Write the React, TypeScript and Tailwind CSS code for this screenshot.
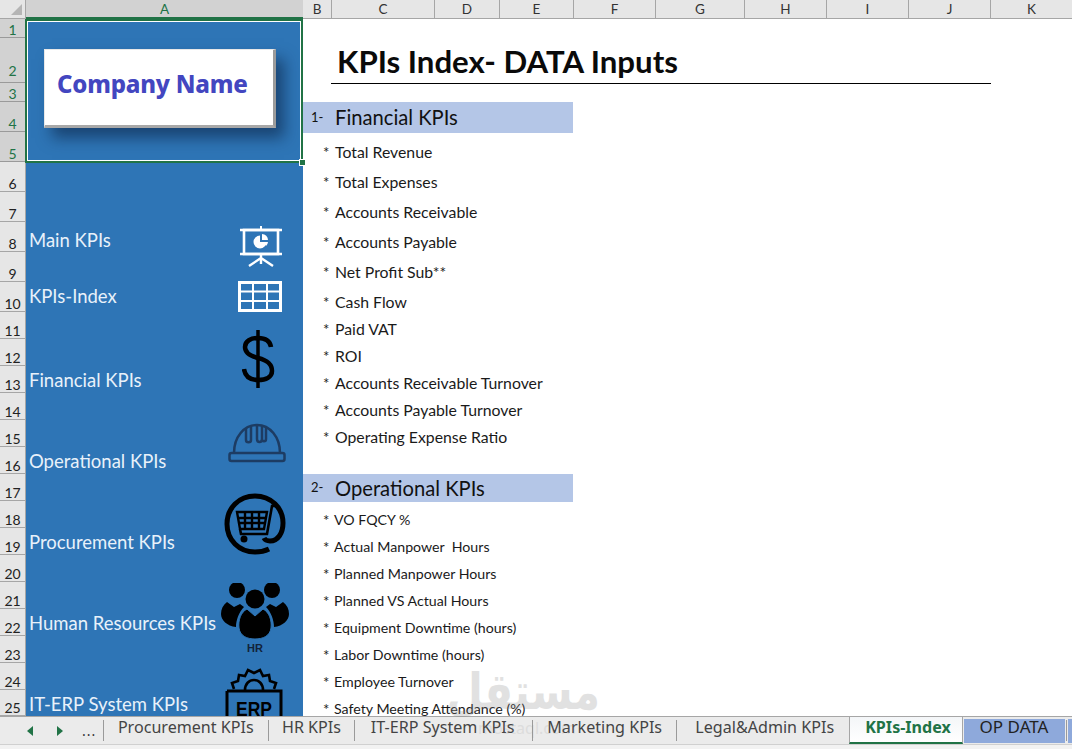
import React from 'react'

const calibri = "font-['Lato','Noto_Sans',sans-serif]"

const columns = [
  { name: 'B', w: 'w-[29px]' },
  { name: 'C', w: 'w-[103px]' },
  { name: 'D', w: 'w-[65px]' },
  { name: 'E', w: 'w-[74px]' },
  { name: 'F', w: 'w-[82px]' },
  { name: 'G', w: 'w-[89px]' },
  { name: 'H', w: 'w-[82px]' },
  { name: 'I', w: 'w-[82px]' },
  { name: 'J', w: 'w-[82px]' },
  { name: 'K', w: 'w-[82px]' },
]

const rows = [
  { n: 1, h: 'h-[19px]' },
  { n: 2, h: 'h-[45px]' },
  { n: 3, h: 'h-[19px]' },
  { n: 4, h: 'h-[30px]' },
  { n: 5, h: 'h-[30px]' },
  { n: 6, h: 'h-[30px]' },
  { n: 7, h: 'h-[30px]' },
  { n: 8, h: 'h-[30px]' },
  { n: 9, h: 'h-[30px]' },
  { n: 10, h: 'h-[30px]' },
  ...[11, 12, 13, 14, 15, 16, 17, 18, 19, 20, 21, 22, 23, 24].map((n) => ({ n, h: 'h-[27px]' })),
  { n: 25, h: 'h-[26px]' },
]

// column A labels, keyed by row
const sideLabels: Record<number, { text: string; pad: string }> = {
  8: { text: 'Main KPIs', pad: 'pt-[7px]' },
  10: { text: 'KPIs-Index', pad: 'pb-[1px]' },
  13: { text: 'Financial KPIs', pad: 'pt-[3px]' },
  16: { text: 'Operational KPIs', pad: 'pt-[3px]' },
  19: { text: 'Procurement KPIs', pad: 'pt-[3px]' },
  22: { text: 'Human Resources KPIs', pad: 'pt-[3px]' },
  25: { text: 'IT-ERP System KPIs', pad: 'pt-[4px]' },
}

const financial = [
  'Total Revenue',
  'Total Expenses',
  'Accounts Receivable',
  'Accounts Payable',
  'Net Profit Sub**',
  'Cash Flow',
  'Paid VAT',
  'ROI',
  'Accounts Receivable Turnover',
  'Accounts Payable Turnover',
  'Operating Expense Ratio',
]

const operational = [
  'VO FQCY %',
  'Actual Manpower  Hours',
  'Planned Manpower Hours',
  'Planned VS Actual Hours',
  'Equipment Downtime (hours)',
  'Labor Downtime (hours)',
  'Employee Turnover',
  'Safety Meeting Attendance (%)',
]

function BigItem({ text, h }: { text: string; h: string }) {
  return (
    <div className={`${h} flex items-end text-[15.8px] leading-[20px] text-[#1a1a1a]`}>
      <span className="w-[32px] pl-[20px] text-[15px]">*</span>
      <span className="whitespace-pre">{text}</span>
    </div>
  )
}

function SmallItem({ text, h }: { text: string; h: string }) {
  return (
    <div className={`${h} flex items-end text-[14.2px] leading-[16px] text-[#1a1a1a]`}>
      <span className="w-[31px] pl-[20px] text-[15px]">*</span>
      <span className="whitespace-pre">{text}</span>
    </div>
  )
}

function SectionBand({ num, text, h }: { num: string; text: string; h: string }) {
  return (
    <div className={`${h} w-[270px] bg-[#b4c6e7] flex items-center text-[#111]`}>
      <span className="w-[32px] pl-[8px] text-[13px]">{num}</span>
      <span className="text-[20.2px] leading-none">{text}</span>
    </div>
  )
}

function BoardIcon() {
  return (
    <svg width="44" height="42" viewBox="0 0 44 42" className="absolute left-[213px] top-[206px]" fill="none" stroke="#fff">
      <path d="M22 1v3" strokeWidth="2" />
      <path d="M1 5h42M1 29h42" strokeWidth="2.4" />
      <rect x="5" y="5" width="34" height="24" strokeWidth="2.6" />
      <path d="M22 29v4M22 33l-12 8M22 33l12 8M22 33v6" strokeWidth="2.4" />
      <path d="M21 10.500a6.500 6.500 0 1 0 6.500 6.500H21z" fill="#fff" stroke="none" />
      <path d="M23 9a6 6 0 0 1 6 6h-6zM24 17h5a6 6 0 0 1-2 4z" fill="#fff" stroke="none" />
    </svg>
  )
}

function TableIcon() {
  return (
    <svg width="44" height="31" viewBox="0 0 44 31" className="absolute left-[212px] top-[262px]" fill="none" stroke="#fff">
      <rect x="1.500" y="1.500" width="41" height="28" strokeWidth="3" />
      <path d="M1 10.500h42M1 20h42M15 1v29M29 1v29" strokeWidth="2" />
    </svg>
  )
}

function DollarIcon() {
  return (
    <svg width="34" height="58" viewBox="0 0 34 58" className="absolute left-[216px] top-[311px]" fill="none" stroke="#000" strokeWidth="4.500">
      <path d="M29 17c-1-6-6-9-13-9S3 11 3 17c0 6 5 9 13 11s14 5 14 13c0 6-6 9-14 9S3 46 2 39" />
      <path d="M16 0v58" strokeWidth="3.500" />
    </svg>
  )
}

function HelmetIcon() {
  return (
    <svg width="58" height="40" viewBox="0 0 58 40" className="absolute left-[202px] top-[404px]" fill="none" stroke="#1d3c63" strokeWidth="2.500">
      <path d="M6 30c0-16 10-28 23-28s23 12 23 28" />
      <rect x="1.500" y="30" width="55" height="8" rx="2" />
      <path d="M18 5v12c0 3 5 3 5 0V3M23 17V3M29 3v13c0 4 5 4 5 0V3M38 5v11c0 3-4 3-4 0" />
    </svg>
  )
}

function CartIcon() {
  return (
    <svg width="62" height="62" viewBox="0 0 62 62" className="absolute left-[198px] top-[474px]" fill="none" stroke="#000">
      <path d="M45 56c-4 2-8 3-14 3C15 59 3 47 3 31S15 3 31 3s28 12 28 27c0 10-5 18-13 18-3 0-5-1-6-3" strokeWidth="5" />
      <path d="M13 19h30l-3 17H16zM13 25h29M14 30h27M21 19v17M28 19v17M35 19v17" strokeWidth="2.400" />
      <path d="M16 36l1 5h26l5-28h6" strokeWidth="2.600" />
      <circle cx="20" cy="46" r="3.500" fill="#000" stroke="none" />
    </svg>
  )
}

function PeopleIcon() {
  return (
    <svg width="68" height="72" viewBox="0 0 68 72" className="absolute left-[195px] top-[564px]" fill="#000">
      <circle cx="16" cy="7" r="8" />
      <circle cx="51" cy="7" r="8" />
      <path d="M6 19l7 5 6-3 4 3c-5 5-8 13-8 20C6 43 0 37 0 31c0-5 2-9 6-12z" />
      <path d="M62 19l-7 5-6-3-4 3c5 5 8 13 8 20 9-1 15-7 15-13 0-5-2-9-6-12z" />
      <circle cx="34" cy="16" r="9.500" />
      <path d="M26 26l8 7 8-7c6 3 9 11 8 19-1 8-8 11-16 11s-15-3-16-11c-1-8 2-16 8-19z" stroke="#2e75b6" strokeWidth="1" />
      <text x="34" y="69" textAnchor="middle" fontFamily="Liberation Sans" fontWeight="700" fontSize="11" fill="#12233a">HR</text>
    </svg>
  )
}

function ErpIcon() {
  return (
    <svg width="58" height="50" viewBox="0 0 58 50" className="absolute left-[199px] top-[647px]" fill="none" stroke="#000" strokeWidth="2.600">
      <path d="M9 23l-2-6 6-2 1-6 6 1 3-6 6 3 6-3 3 6 6-1 1 6 6 2-2 6" />
      <path d="M20 24c0-6 4-10 9-10s9 4 9 10" />
      <path d="M2 25h54v25M2 25v25" strokeWidth="3" />
      <text x="29" y="50" textAnchor="middle" fontFamily="Liberation Sans" fontWeight="700" fontSize="20" fill="#000" stroke="none" textLength="36" lengthAdjust="spacingAndGlyphs">ERP</text>
    </svg>
  )
}

function TabSep() {
  return <div className="w-px h-[21px] mt-[3px] bg-[#9a9a9a] shrink-0" />
}

function SheetTabs() {
  return (
    <div className="relative h-[33px] border-t border-[#a6a6a6] bg-[#f2f2f2] overflow-hidden font-['Noto_Sans',sans-serif] text-[16.1px] leading-[20px] text-[#444]">
      <div className="h-[28px] bg-[#ebebeb] border-b border-[#d0d0d0] flex items-start">
        <div className="w-[103px] h-[27px] shrink-0 flex items-center">
          <span className="ml-[27px] w-0 h-0 border-y-[5px] border-y-transparent border-r-[6px] border-r-[#217346]" />
          <span className="ml-[24px] w-0 h-0 border-y-[5px] border-y-transparent border-l-[6px] border-l-[#217346]" />
          <span className="ml-[19px] text-[#333] text-[14px] tracking-[1px]">...</span>
        </div>
        <TabSep />
        <span className="w-[164px] text-center whitespace-nowrap">Procurement KPIs</span>
        <TabSep />
        <span className="w-[86px] text-center whitespace-nowrap">HR KPIs</span>
        <TabSep />
        <span className="w-[177px] text-center whitespace-nowrap pr-[2px]">IT-ERP System KPIs</span>
        <TabSep />
        <span className="w-[144px] text-center whitespace-nowrap">Marketing KPIs</span>
        <TabSep />
        <span className="w-[172px] text-center whitespace-nowrap pl-[3px]">Legal&amp;Admin KPIs</span>
        <div className="w-[114px] h-[27px] shrink-0 border-x border-[#a6a6a6] border-b-2 border-b-[#217346] bg-gradient-to-b from-[#f4f6f8] to-white text-center font-bold text-[#217346] pl-[4px]">
          KPIs-Index
        </div>
        <div className="ml-[1px] w-[101px] h-[24px] mt-[2px] shrink-0 bg-[#8ea9db] text-center text-[17px] leading-[16px] pr-[1px] text-[#222]">OP DATA</div>
        <div className="w-px h-[21px] mt-[3px] ml-[1px] bg-[#9a9a9a] shrink-0" />
        <div className="ml-[1px] w-[4px] h-[24px] mt-[2px] shrink-0 bg-[#8ea9db]" />
      </div>
    </div>
  )
}

export default function App() {
  return (
    <div className={`w-[1072px] h-[749px] overflow-hidden bg-white relative ${calibri}`}>
      {/* column headers */}
      <div className="flex h-[19px] text-[13.500px] leading-[19px] text-[#333]">
        <div className="w-[26px] h-[19px] bg-[#e6e6e6] border-b border-r border-[#a6a6a6] relative shrink-0">
          <div className="absolute right-[3px] bottom-[3px] w-0 h-0 border-l-[11px] border-l-transparent border-b-[11px] border-b-[#b5b5b5]" />
        </div>
        <div className="w-[277px] bg-[#d2d2d2] border-b-2 border-[#217346] text-center text-[#217346] shrink-0">A</div>
        {columns.map((c) => (
          <div key={c.name} className={`${c.w} shrink-0 bg-[#e6e6e6] border-b border-r border-[#a6a6a6] text-center`}>
            {c.name}
          </div>
        ))}
      </div>

      <div className="flex h-[697px] overflow-hidden">
        {/* row headers */}
        <div className="w-[26px] shrink-0">
          {rows.map((r) => (
            <div
              key={r.n}
              className={`${r.h} border-b border-r flex items-end justify-center text-[14px] leading-[15px] ${
                r.n === 2 ? 'pb-[4px]' : ''
              } ${
                r.n <= 5
                  ? 'bg-[#d2d2d2] text-[#217346] border-[#9a9a9a]'
                  : 'bg-[#e6e6e6] text-[#222] border-[#a6a6a6]'
              }`}
            >
              {r.n}
            </div>
          ))}
        </div>

        {/* column A */}
        <div className="w-[277px] shrink-0 bg-[#2e75b6] relative">
          {rows.map((r) => (
            <div key={r.n} className={`${r.h} flex items-center pl-[3px] text-[18.500px] text-[#e8f1fa] whitespace-nowrap ${sideLabels[r.n]?.pad ?? ''}`}>
              {sideLabels[r.n]?.text}
            </div>
          ))}
        </div>

        {/* sheet body */}
        <div className="flex-1 bg-white">
          <div className="h-[19px]" />
          <div className="h-[46px] ml-[28px] w-[660px] border-b border-black flex items-center pl-[6px] pt-[3px]">
            <h1 className="text-[31.200px] font-bold leading-none text-[#0a0a0a] whitespace-nowrap">KPIs Index- DATA Inputs</h1>
          </div>
          <div className="h-[18px]" />
          <SectionBand num="1-" text="Financial KPIs" h="h-[31px]" />
          {financial.map((t, i) => (
            <BigItem key={t} text={t} h={i === 0 ? 'h-[29px]' : i < 6 ? 'h-[30px]' : 'h-[27px]'} />
          ))}
          <div className="h-[27px]" />
          <SectionBand num="2-" text="Operational KPIs" h="h-[28px]" />
          {operational.map((t, i) => (
            <SmallItem key={t} text={t} h={i === 0 ? 'h-[26px]' : 'h-[27px]'} />
          ))}
        </div>
      </div>

      {/* floating shapes, clipped to the sheet area */}
      <div className="absolute left-[26px] top-[19px] w-[277px] h-[697px] overflow-hidden pointer-events-none">
        <div className="absolute left-[18px] top-[30px] w-[232px] h-[79px] bg-white border-r-[3px] border-b-[3px] border-r-[#9b9b9b] border-b-[#a8a8a8] border-t border-l border-t-[#e8e8e8] border-l-[#e8e8e8] shadow-[8px_10px_14px_rgba(10,30,60,0.55)] flex items-center pl-[12px] pb-[8px]">
          <span className="font-['Noto_Sans',sans-serif] font-extrabold text-[24px] tracking-[-0.2px] text-[#4346c0] whitespace-nowrap">Company Name</span>
        </div>
        <BoardIcon />
        <TableIcon />
        <DollarIcon />
        <HelmetIcon />
        <CartIcon />
        <PeopleIcon />
        <ErpIcon />
      </div>

      {/* active cell selection */}
      <div className="absolute left-[25px] top-[19px] w-[278px] h-[144px] border-2 border-[#217346] outline outline-1 -outline-offset-3 outline-white pointer-events-none" />
      <div className="absolute left-[299px] top-[159px] w-[7px] h-[7px] bg-[#217346] border border-white" />

      <SheetTabs />

      {/* site watermark over the sheet */}
      <div className="absolute left-[470px] top-[662px] w-[130px] text-center font-['DejaVu_Sans',sans-serif] font-bold text-[42px] leading-[60px] text-[#8a8a8a] opacity-25 scale-y-[1.2] pointer-events-none" dir="rtl">
        مستقل
      </div>
      <div className="absolute left-[478px] top-[716px] font-['Noto_Sans',sans-serif] text-[16px] text-[#8a8a8a] opacity-15 pointer-events-none">mostaql.com</div>
    </div>
  )
}
